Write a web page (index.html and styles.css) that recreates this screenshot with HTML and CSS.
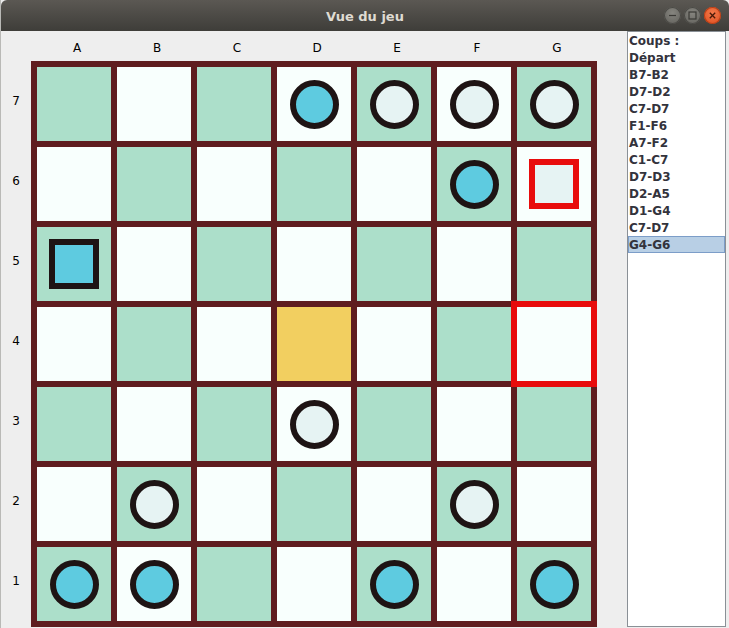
FILE: index.html
```html
<!DOCTYPE html>
<html lang="fr">
<head>
<meta charset="utf-8">
<title>Vue du jeu</title>
<link rel="stylesheet" href="styles.css">
</head>
<body>
<div class="window">
  <header class="titlebar">
    <span class="title">Vue du jeu</span>
    <div class="controls">
      <span class="btn btn-min"><svg width="17" height="17" viewBox="0 0 17 17"><line x1="5" y1="8.5" x2="12" y2="8.5" stroke="#3a3935" stroke-width="1.2"/></svg></span>
      <span class="btn btn-max"><svg width="17" height="17" viewBox="0 0 17 17"><rect x="5" y="5" width="7" height="7" fill="none" stroke="#3a3935" stroke-width="1.2"/></svg></span>
      <span class="btn btn-close"><svg width="17" height="17" viewBox="0 0 17 17"><path d="M5.8 5.8L11.2 11.2M11.2 5.8L5.8 11.2" stroke="#4a1a08" stroke-width="1.3"/></svg></span>
    </div>
  </header>
  <main class="content">
    <section class="game">
      <div class="corner"></div>
      <div class="col-labels">
        <span>A</span><span>B</span><span>C</span><span>D</span><span>E</span><span>F</span><span>G</span>
      </div>
      <div class="row-labels">
        <span>7</span><span>6</span><span>5</span><span>4</span><span>3</span><span>2</span><span>1</span>
      </div>
      <div class="board">
        <!-- row 7 -->
        <div class="cell g"></div>
        <div class="cell w"></div>
        <div class="cell g"></div>
        <div class="cell w"><span class="pawn blue"></span></div>
        <div class="cell g"><span class="pawn light"></span></div>
        <div class="cell w"><span class="pawn light"></span></div>
        <div class="cell g"><span class="pawn light"></span></div>
        <!-- row 6 -->
        <div class="cell w"></div>
        <div class="cell g"></div>
        <div class="cell w"></div>
        <div class="cell g"></div>
        <div class="cell w"></div>
        <div class="cell g"><span class="pawn blue"></span></div>
        <div class="cell w"><span class="block light red"></span></div>
        <!-- row 5 -->
        <div class="cell g"><span class="block blue"></span></div>
        <div class="cell w"></div>
        <div class="cell g"></div>
        <div class="cell w"></div>
        <div class="cell g"></div>
        <div class="cell w"></div>
        <div class="cell g"></div>
        <!-- row 4 -->
        <div class="cell w"></div>
        <div class="cell g"></div>
        <div class="cell w"></div>
        <div class="cell y"></div>
        <div class="cell w"></div>
        <div class="cell g"></div>
        <div class="cell w target"></div>
        <!-- row 3 -->
        <div class="cell g"></div>
        <div class="cell w"></div>
        <div class="cell g"></div>
        <div class="cell w"><span class="pawn light"></span></div>
        <div class="cell g"></div>
        <div class="cell w"></div>
        <div class="cell g"></div>
        <!-- row 2 -->
        <div class="cell w"></div>
        <div class="cell g"><span class="pawn light"></span></div>
        <div class="cell w"></div>
        <div class="cell g"></div>
        <div class="cell w"></div>
        <div class="cell g"><span class="pawn light"></span></div>
        <div class="cell w"></div>
        <!-- row 1 -->
        <div class="cell g"><span class="pawn blue"></span></div>
        <div class="cell w"><span class="pawn blue"></span></div>
        <div class="cell g"></div>
        <div class="cell w"></div>
        <div class="cell g"><span class="pawn blue"></span></div>
        <div class="cell w"></div>
        <div class="cell g"><span class="pawn blue"></span></div>
      </div>
    </section>
    <aside class="moves">
      <ul class="move-list">
        <li>Coups :</li>
        <li>Départ</li>
        <li>B7-B2</li>
        <li>D7-D2</li>
        <li>C7-D7</li>
        <li>F1-F6</li>
        <li>A7-F2</li>
        <li>C1-C7</li>
        <li>D7-D3</li>
        <li>D2-A5</li>
        <li>D1-G4</li>
        <li>C7-D7</li>
        <li class="selected">G4-G6</li>
      </ul>
    </aside>
  </main>
</div>
</body>
</html>
```

FILE: styles.css
```css
* { box-sizing: border-box; }
html, body {
  margin: 0;
  padding: 0;
  background: #eeeeee;
}
body {
  width: 729px;
  height: 628px;
  overflow: hidden;
  font-family: "DejaVu Sans", sans-serif;
}
.window {
  width: 729px;
  height: 628px;
  display: flex;
  flex-direction: column;
  background: #eeeeee;
  border-left: 1px solid #b9b9b6;
}
.titlebar {
  height: 31px;
  flex: none;
  display: flex;
  align-items: center;
  justify-content: center;
  background: linear-gradient(#5b5853, #3e3d39);
  border-radius: 6px 6px 0 0;
  position: relative;
}
.title {
  color: #dfdbd2;
  font-family: "DejaVu Sans", sans-serif;
  font-weight: bold;
  font-size: 13px;
  margin-top: 1px;
}
.controls {
  position: absolute;
  right: 8px;
  top: 7px;
  display: flex;
  gap: 3px;
}
.btn {
  width: 17px;
  height: 17px;
  border-radius: 50%;
  display: block;
  background: radial-gradient(circle at 50% 35%, #86857f, #5f5e59);
  box-shadow: inset 0 0 0 1px #4a4945;
}
.btn svg { display: block; }
.btn-close {
  background: radial-gradient(circle at 50% 35%, #f47a4b, #dc4b1c);
  box-shadow: inset 0 0 0 1px #b83e16;
}
.content {
  flex: 1;
  display: flex;
  align-items: flex-start;
}
.game {
  display: grid;
  grid-template-columns: 30px 566px;
  grid-template-rows: 30px 566px;
}
.col-labels {
  display: flex;
  padding-left: 6px;
  padding-top: 4px;
  align-items: center;
  font-size: 12px;
  color: #000;
}
.col-labels span {
  width: 80px;
  text-align: center;
}
.row-labels {
  display: flex;
  flex-direction: column;
  font-size: 12px;
  color: #000;
}
.row-labels span {
  height: 80px;
  display: flex;
  align-items: center;
  justify-content: center;
}
.board {
  display: grid;
  grid-template-columns: repeat(7, 74px);
  grid-template-rows: repeat(7, 74px);
  gap: 6px;
  padding: 6px;
  background: #5f1d1f;
  width: 566px;
  height: 566px;
}
.cell {
  display: flex;
  align-items: center;
  justify-content: center;
  position: relative;
}
.cell.g { background: #acdfca; }
.cell.w { background: #f8fffd; }
.cell.y { background: #f2cf60; }
.cell.target::after {
  content: "";
  position: absolute;
  inset: -6px;
  border: 6px solid #e80c0c;
}
.pawn {
  width: 49px;
  height: 49px;
  border-radius: 50%;
  border: 6px solid #1e1414;
}
.block {
  width: 50px;
  height: 50px;
  border: 6px solid #1e1414;
}
.blue { background: #5ecbe0; }
.light { background: #e6f3f3; }
.block.red { border-color: #e80c0c; }
.moves {
  margin-left: 30px;
  width: 99px;
  height: 596px;
  background: #ffffff;
  border: 1px solid #8a9096;
}
.move-list {
  list-style: none;
  margin: 0;
  padding: 0;
  font-family: "DejaVu Sans", sans-serif;
  font-weight: bold;
  font-size: 12px;
  color: #33333c;
}
.move-list li {
  height: 17px;
  line-height: 17px;
  padding-left: 1px;
  border-top: 1px solid transparent;
  border-bottom: 1px solid transparent;
}
.move-list li.selected {
  background: #b8cfe5;
  border: 1px solid #7c9dc8;
  padding-left: 0;
}
```
